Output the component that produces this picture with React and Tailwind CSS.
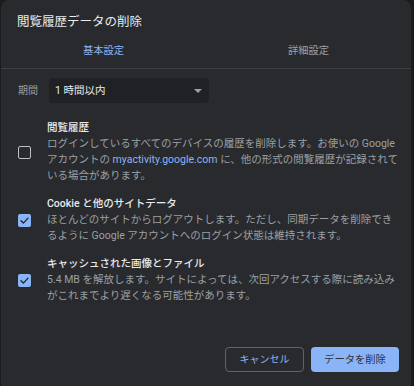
import React from "react";

const font = { fontFamily: 'Roboto, "Noto Sans CJK JP", sans-serif' };

function Check({ checked }) {
  if (checked) {
    return (
      <div className="w-[13px] h-[13px] rounded-[2px] bg-[#8ab4f8] flex items-center justify-center shrink-0">
        <svg width="11" height="11" viewBox="0 0 12 12" fill="none">
          <path d="M2.2 6.2 L4.8 8.8 L9.8 3.4" stroke="#202124" strokeWidth="1.4" strokeLinecap="round" strokeLinejoin="round" />
        </svg>
      </div>
    );
  }
  return <div className="w-[13px] h-[13px] rounded-[2px] border-[1.5px] border-[#bdc1c6] shrink-0" />;
}

function Item({ checked, title, lines }) {
  return (
    <div className="flex items-center gap-[16px] pl-[17px]">
      <Check checked={checked} />
      <div className="flex flex-col">
        <div className="text-[10.5px] leading-[16px] font-medium text-[#e8eaed] whitespace-nowrap">{title}</div>
        {lines.map((l, i) => (
          <div key={i} className="text-[10.5px] leading-[16px] text-[#9aa0a6] whitespace-nowrap">{l}</div>
        ))}
      </div>
    </div>
  );
}

export default function App() {
  return (
    <div className="w-[414px] h-[386px] bg-[#1a1b1d] pl-[1px] overflow-hidden" style={font}>
      <div className="w-[410px] h-[386px] bg-[#292a2d] rounded-t-[8px] flex flex-col">
        <div className="pl-[16px] pt-[14px] text-[12.5px] leading-[16px] text-[#e8eaed]">閲覧履歴データの削除</div>
        <div className="flex pt-[13px] pb-[9px] border-b border-[#3c4043]">
          <div className="flex-1 text-center text-[10.3px] leading-[16px] text-[#8ab4f8]">基本設定</div>
          <div className="flex-1 text-center text-[10.3px] leading-[16px] text-[#9aa0a6]">詳細設定</div>
        </div>
        <div className="flex items-center mt-[9px] pl-[17px] gap-[11px]">
          <div className="text-[10px] text-[#9aa0a6]">期間</div>
          <div className="w-[160px] h-[25px] rounded-[4px] bg-[#202124] flex items-center justify-between pl-[6px] pr-[7px]">
            <span className="text-[10.5px] text-[#e8eaed]">1 時間以内</span>
            <svg width="8" height="4" viewBox="0 0 8 4"><path d="M0 0 L8 0 L4 4 Z" fill="#9aa0a6" /></svg>
          </div>
        </div>
        <div className="flex flex-col gap-[12px] mt-[17px]">
          <Item
            checked={false}
            title="閲覧履歴"
            lines={[
              <>ログインしているすべてのデバイスの履歴を削除します。お使いの Google</>,
              <>アカウントの <span className="text-[#8ab4f8]">myactivity.google.com</span> に、他の形式の閲覧履歴が記録されて</>,
              <>いる場合があります。</>,
            ]}
          />
          <Item
            checked={true}
            title="Cookie と他のサイトデータ"
            lines={[
              "ほとんどのサイトからログアウトします。ただし、同期データを削除でき",
              "るように Google アカウントへのログイン状態は維持されます。",
            ]}
          />
          <Item
            checked={true}
            title="キャッシュされた画像とファイル"
            lines={[
              "5.4 MB を解放します。サイトによっては、次回アクセスする際に読み込み",
              "がこれまでより遅くなる可能性があります。",
            ]}
          />
        </div>
        <div className="flex justify-end gap-[7px] pr-[12px] mt-auto mb-[14px]">
          <button className="w-[79px] h-[25px] rounded-[4px] border border-[#5f6368] text-[10px] text-[#8ab4f8]">キャンセル</button>
          <button className="w-[88px] h-[25px] rounded-[4px] bg-[#8ab4f8] text-[10.3px] text-[#303134]">データを削除</button>
        </div>
      </div>
    </div>
  );
}
